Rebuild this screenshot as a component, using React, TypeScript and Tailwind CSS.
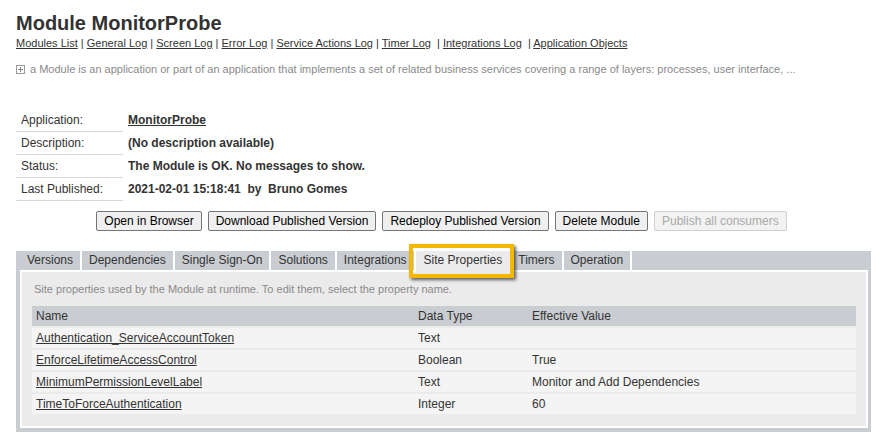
import React from 'react';

const links = [
  'Modules List',
  'General Log',
  'Screen Log',
  'Error Log',
  'Service Actions Log',
  'Timer Log',
  'Integrations Log',
  'Application Objects',
];

const info = [
  { label: 'Application:', value: 'MonitorProbe', link: true },
  { label: 'Description:', value: '(No description available)' },
  { label: 'Status:', value: 'The Module is OK. No messages to show.' },
  { label: 'Last Published:', value: '2021-02-01 15:18:41  by  Bruno Gomes' },
];

const tabs = ['Versions', 'Dependencies', 'Single Sign-On', 'Solutions', 'Integrations', 'Site Properties', 'Timers', 'Operation'];

const rows = [
  { name: 'Authentication_ServiceAccountToken', type: 'Text', value: '' },
  { name: 'EnforceLifetimeAccessControl', type: 'Boolean', value: 'True' },
  { name: 'MinimumPermissionLevelLabel', type: 'Text', value: 'Monitor and Add Dependencies' },
  { name: 'TimeToForceAuthentication', type: 'Integer', value: '60' },
];

const App = () => {
  return (
    <div className="w-[880px] h-[440px] overflow-hidden bg-white pl-4 pr-[9px] pt-[11px] font-['Liberation_Sans',Arial,sans-serif] text-[#333]">
      <h1 className="text-[20px] leading-[24px] font-bold">Module MonitorProbe</h1>

      <div className="mt-[1px] text-[11px] leading-[14px] whitespace-pre">
        {links.map((l, i) => (
          <span key={l}>
            {i > 0 && <span>{i >= 6 ? '  | ' : ' | '}</span>}
            <a href="#" className="underline">{l}</a>
          </span>
        ))}
      </div>

      <div className="mt-[12px] flex items-center gap-[5px] text-[11px] leading-[14px] text-[#8a8a8a]">
        <svg width="9" height="9" viewBox="0 0 9 9" className="shrink-0">
          <rect x="0.5" y="0.5" width="8" height="8" fill="none" stroke="#999" />
          <path d="M2 4.5h5M4.5 2v5" stroke="#888" />
        </svg>
        <span>a Module is an application or part of an application that implements a set of related business services covering a range of layers: processes, user interface, ...</span>
      </div>

      <div className="mt-[33px] text-[12px] leading-[14px]">
        {info.map((r) => (
          <div key={r.label} className="flex">
            <div className="w-[107px] pl-[5px] pt-[4px] pb-[4px] border-b border-[#d9d9d9]">{r.label}</div>
            <div className="pl-[5px] pt-[4px] font-bold whitespace-pre">
              {r.link ? <a href="#" className="underline">{r.value}</a> : r.value}
            </div>
          </div>
        ))}
      </div>

      <div className="mt-[10px] flex justify-center gap-[6px] text-[12px] leading-[14px] pr-[4px]">
        {['Open in Browser', 'Download Published Version', 'Redeploy Published Version', 'Delete Module'].map((b) => (
          <button key={b} className="h-[20px] px-[7px] border border-[#767676] rounded-[2px] bg-[#efefef] text-black">
            {b}
          </button>
        ))}
        <button disabled className="h-[20px] px-[7px] border border-[#d0d0d0] rounded-[2px] bg-[#f2f2f2] text-[#a9a9a9]">
          Publish all consumers
        </button>
      </div>

      <div className="mt-[20px] bg-[#c9cdd1] pl-[4px] pr-[3px] pb-[4px]">
        <div className="flex h-[19px] text-[12px] leading-[19px]">
          {tabs.map((t) =>
            t === 'Site Properties' ? (
              <div key={t} className="relative z-10 -mb-[2px] bg-[#ebebeb] pl-[8px] pr-[9px]">
                {t}
                <div className="absolute -left-[7px] -top-[7px] -right-[3px] -bottom-[6px] border-4 border-[#f5b700] shadow-[2px_2px_3px_rgba(0,0,0,0.6)]" />
              </div>
            ) : (
              <div key={t} className="px-[7px] border-r-2 border-white">{t}</div>
            )
          )}
        </div>
        <div className="border-2 border-white bg-[#ebebeb] pt-[10px] pb-[12px] px-[10px]">
          <div className="pl-[2px] text-[11px] leading-[14px] text-[#8a8a8a]">
            Site properties used by the Module at runtime. To edit them, select the property name.
          </div>
          <div className="mt-[10px] text-[12px] leading-[20px]">
            <div className="flex bg-[#c9cdd1]">
              <div className="w-[382px] pl-[4px]">Name</div>
              <div className="w-[114px] pl-[4px]">Data Type</div>
              <div className="flex-1 pl-[4px]">Effective Value</div>
            </div>
            {rows.map((r) => (
              <div key={r.name} className="mt-[2px] flex bg-[#f4f4f4]">
                <div className="w-[382px] pl-[4px]">
                  <a href="#" className="underline">{r.name}</a>
                </div>
                <div className="w-[114px] pl-[4px]">{r.type}</div>
                <div className="flex-1 pl-[4px]">{r.value}</div>
              </div>
            ))}
          </div>
        </div>
      </div>
    </div>
  );
};

export default App;
